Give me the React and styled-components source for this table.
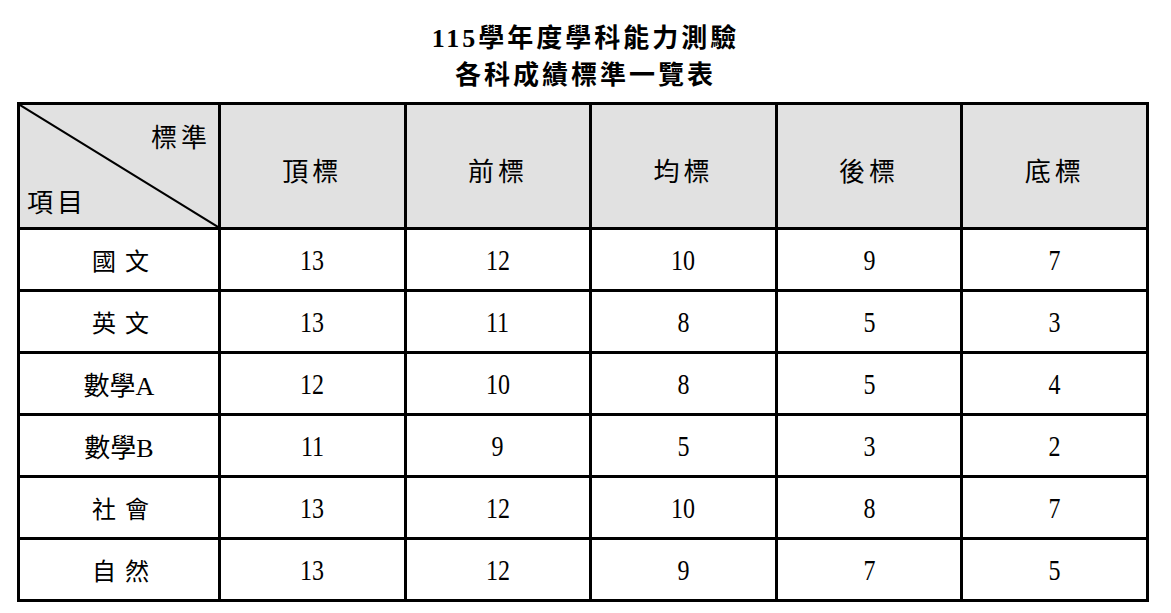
import React from 'react'
import styled, { createGlobalStyle } from 'styled-components'

const GlobalStyle = createGlobalStyle`
  body {
    margin: 0;
    background: #ffffff;
    color: #000000;
    font-family: "Liberation Serif", "Noto Sans CJK TC", serif;
  }
`

const Page = styled.div`
  width: 1171px;
  height: 613px;
  padding-top: 20px;
  box-sizing: border-box;
`

const Title = styled.h1`
  margin: 0 0 8px 0;
  text-align: center;
  font-size: 26px;
  line-height: 37px;
  font-weight: 700;
  letter-spacing: 3px;
`

const Table = styled.table`
  margin-left: 17px;
  width: 1132px;
  table-layout: fixed;
  border-collapse: collapse;
  border: 3px solid #000;
  font-size: 26px;
`

const HeadCell = styled.th`
  height: 116px;
  padding: 6px 0 0 0;
  border: 3px solid #000;
  background: #e1e1e1;
  font-weight: 400;
  letter-spacing: 4px;
  text-align: center;
  vertical-align: middle;
`

const CornerCell = styled.th`
  position: relative;
  width: 198px;
  height: 122px;
  padding: 0;
  border: 3px solid #000;
  background: #e1e1e1;
  font-weight: 400;
`

const Diagonal = styled.svg`
  position: absolute;
  inset: 0;
  width: 100%;
  height: 100%;
`

const CornerInner = styled.div`
  height: 122px;
  display: flex;
  flex-direction: column;
  justify-content: space-between;
  padding: 12px 7px 8px 7px;
  box-sizing: border-box;
  letter-spacing: 4px;
`

const CornerTop = styled.span`
  align-self: flex-end;
`

const CornerBottom = styled.span`
  align-self: flex-start;
`

const Cell = styled.td`
  height: 59px;
  padding: 0;
  border: 3px solid #000;
  text-align: center;
  vertical-align: middle;
  font-size: 30px;
`

const LabelCell = styled(Cell)`
  font-size: ${(p) => (p.$spaced ? '24px' : '26px')};
  letter-spacing: ${(p) => (p.$spaced ? '9px' : '0')};
  padding-left: ${(p) => (p.$spaced ? '12px' : '0')};
`

const Narrow = styled.span`
  display: inline-block;
  transform: scaleX(0.8);
`

const heads = ['頂標', '前標', '均標', '後標', '底標']

const rows = [
  { name: '國文', spaced: true, v: [13, 12, 10, 9, 7] },
  { name: '英文', spaced: true, v: [13, 11, 8, 5, 3] },
  { name: '數學A', v: [12, 10, 8, 5, 4] },
  { name: '數學B', v: [11, 9, 5, 3, 2] },
  { name: '社會', spaced: true, v: [13, 12, 10, 8, 7] },
  { name: '自然', spaced: true, v: [13, 12, 9, 7, 5] },
]

export default function App() {
  return (
    <Page>
      <GlobalStyle />
      <Title>
        115學年度學科能力測驗
        <br />
        各科成績標準一覽表
      </Title>
      <Table>
        <thead>
          <tr>
            <CornerCell>
              <Diagonal preserveAspectRatio="none" viewBox="0 0 100 100">
                <line x1="0" y1="0" x2="100" y2="100" stroke="#000" strokeWidth="2" vectorEffect="non-scaling-stroke" />
              </Diagonal>
              <CornerInner>
                <CornerTop>標準</CornerTop>
                <CornerBottom>項目</CornerBottom>
              </CornerInner>
            </CornerCell>
            {heads.map((h) => (
              <HeadCell key={h}>{h}</HeadCell>
            ))}
          </tr>
        </thead>
        <tbody>
          {rows.map((r) => (
            <tr key={r.name}>
              <LabelCell $spaced={r.spaced}>{r.name}</LabelCell>
              {r.v.map((n, i) => (
                <Cell key={i}>
                  <Narrow>{n}</Narrow>
                </Cell>
              ))}
            </tr>
          ))}
        </tbody>
      </Table>
    </Page>
  )
}
